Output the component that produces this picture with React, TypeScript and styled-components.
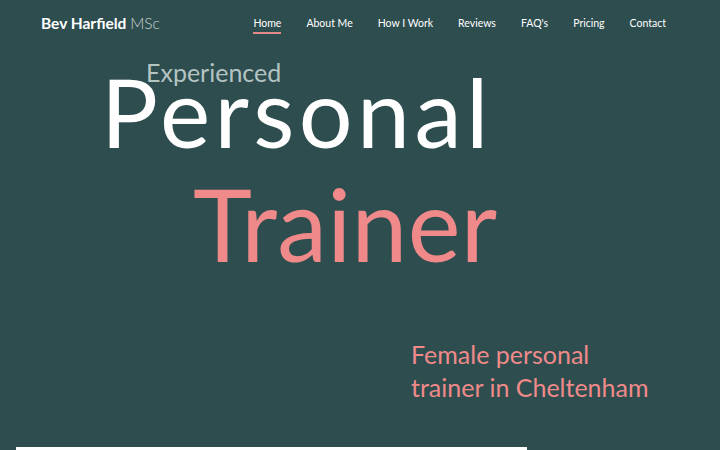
import React from "react";
import styled, { createGlobalStyle } from "styled-components";

const GlobalStyle = createGlobalStyle`
  html, body {
    margin: 0;
    padding: 0;
    background: #2e4d4f;
  }
  body {
    font-family: "Lato", "Liberation Sans", sans-serif;
    overflow: hidden;
  }
`;

const Page = styled.div`
  width: 720px;
  height: 450px;
  background: #2e4d4f;
  display: flex;
  flex-direction: column;
  overflow: hidden;
`;

const Header = styled.header`
  display: flex;
  align-items: center;
  justify-content: space-between;
  height: 46px;
  padding: 0 54px 0 41px;
`;

const Logo = styled.div`
  font-size: 15.5px;
  font-weight: 700;
  color: #ffffff;
  & span {
    font-weight: 300;
    color: #c9d3d2;
  }
`;

const Nav = styled.nav`
  display: flex;
  gap: 25px;
`;

const NavLink = styled.a<{ $active?: boolean }>`
  position: relative;
  font-size: 10.5px;
  color: #ffffff;
  text-decoration: none;
  padding: 4px 0;
  &::after {
    content: "";
    position: absolute;
    left: 0;
    right: 0;
    bottom: -1px;
    height: 2px;
    background: ${(p) => (p.$active ? "#e48a8a" : "transparent")};
  }
`;

const Hero = styled.section`
  flex: 1;
  display: flex;
  flex-direction: column;
`;

const Kicker = styled.div`
  margin: 14px 0 0 146px;
  font-size: 25px;
  line-height: 24px;
  color: #b4c4c2;
`;

const BigWord = styled.div<{ $color: string; $indent: number; $size: number; $spacing: number; $gap: number }>`
  margin: ${(p) => p.$gap}px 0 0 ${(p) => p.$indent}px;
  font-size: ${(p) => p.$size}px;
  line-height: 50px;
  color: ${(p) => p.$color};
  letter-spacing: ${(p) => p.$spacing}px;
`;

const Tagline = styled.p`
  margin: 90px 0 0 411px;
  font-size: 25px;
  line-height: 33px;
  color: #f08a8a;
`;

const Bar = styled.div`
  margin: auto 0 0 16px;
  width: 511px;
  height: 3px;
  background: #ffffff;
`;

const links = ["Home", "About Me", "How I Work", "Reviews", "FAQ's", "Pricing", "Contact"];

export default function App() {
  return (
    <Page>
      <GlobalStyle />
      <Header>
        <Logo>
          Bev Harfield <span>MSc</span>
        </Logo>
        <Nav>
          {links.map((l) => (
            <NavLink key={l} href="#" $active={l === "Home"}>
              {l}
            </NavLink>
          ))}
        </Nav>
      </Header>
      <Hero>
        <Kicker>Experienced</Kicker>
        <BigWord $color="#ffffff" $indent={101} $size={95} $spacing={4.4} $gap={2}>
          Personal
        </BigWord>
        <BigWord $color="#f08a8a" $indent={193} $size={100} $spacing={0.3} $gap={62}>
          Trainer
        </BigWord>
        <Tagline>
          Female personal
          <br />
          trainer in Cheltenham
        </Tagline>
        <Bar />
      </Hero>
    </Page>
  );
}
